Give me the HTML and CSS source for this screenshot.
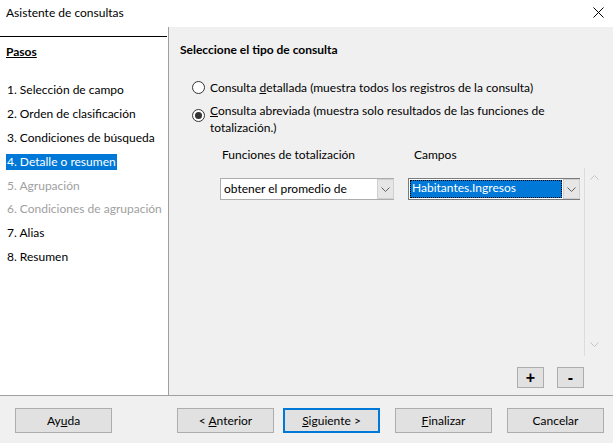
FILE: index.html
```html
<!DOCTYPE html>
<html lang="es">
<head>
<meta charset="utf-8">
<title>Asistente de consultas</title>
<link rel="stylesheet" href="styles.css">
</head>
<body>
<div class="window">
  <div class="titlebar">
    <span class="title">Asistente de consultas</span>
    <span class="close"><svg width="11" height="11" viewBox="0 0 11 11"><path d="M0.5 0.5 L10.5 10.5 M10.5 0.5 L0.5 10.5" stroke="#000" stroke-width="1" fill="none"/></svg></span>
  </div>
  <div class="main">
    <div class="sidebar">
      <div class="rule"></div>
      <div class="pasos">Pasos</div>
      <ul class="steps">
        <li><span>1. Selección de campo</span></li>
        <li><span>2. Orden de clasificación</span></li>
        <li><span>3. Condiciones de búsqueda</span></li>
        <li class="active"><span>4. Detalle o resumen</span></li>
        <li class="disabled"><span>5. Agrupación</span></li>
        <li class="disabled"><span>6. Condiciones de agrupación</span></li>
        <li><span>7. Alias</span></li>
        <li><span>8. Resumen</span></li>
      </ul>
    </div>
    <div class="content">
      <div class="heading">Seleccione el tipo de consulta</div>
      <div class="options">
        <div class="opt">
          <span class="radio r1"></span>
          <span class="optlabel">Consulta <u>d</u>etallada (muestra todos los registros de la consulta)</span>
        </div>
        <div class="opt">
          <span class="radio r2 checked"></span>
          <span class="optlabel"><u>C</u>onsulta abreviada (muestra solo resultados de las funciones de<br>totalización.)</span>
        </div>
      </div>
      <div class="fieldlabels">
        <span class="lab1">Funciones de totalización</span>
        <span class="lab2">Campos</span>
      </div>
      <div class="scrollarea">
        <div class="rows">
          <div class="row">
            <div class="combo c1">
              <span class="value">obtener el promedio de</span>
              <span class="dropbtn"><svg width="9" height="5" viewBox="0 0 9 5"><path d="M0.5 0.5 L4.5 4.5 L8.5 0.5" stroke="#606060" fill="none"/></svg></span>
            </div>
            <div class="combo c2">
              <span class="value sel">Habitantes.Ingresos</span>
              <span class="dropbtn"><svg width="9" height="5" viewBox="0 0 9 5"><path d="M0.5 0.5 L4.5 4.5 L8.5 0.5" stroke="#606060" fill="none"/></svg></span>
            </div>
          </div>
        </div>
        <div class="vscroll">
          <svg width="9" height="5" viewBox="0 0 9 5"><path d="M0.5 4.5 L4.5 0.5 L8.5 4.5" stroke="#c4c4c4" fill="none"/></svg>
          <svg width="9" height="5" viewBox="0 0 9 5"><path d="M0.5 0.5 L4.5 4.5 L8.5 0.5" stroke="#c4c4c4" fill="none"/></svg>
        </div>
      </div>
      <div class="addrem">
        <button class="small">+</button>
        <button class="small">-</button>
      </div>
    </div>
  </div>
  <div class="footer">
    <button class="btn help">Ay<u>u</u>da</button>
    <button class="btn prev">&lt; <u>A</u>nterior</button>
    <button class="btn next"><u>S</u>iguiente &gt;</button>
    <button class="btn finish"><u>F</u>inalizar</button>
    <button class="btn cancel">Cancelar</button>
  </div>
</div>
</body>
</html>
```

FILE: styles.css
```css
* { box-sizing: border-box; }
html, body { margin: 0; padding: 0; }
body {
  width: 613px;
  height: 443px;
  overflow: hidden;
  font-family: Lato, "Open Sans", sans-serif;
  font-size: 12px;
  color: #000;
  background: #f0f0f0;
}
.window { width: 613px; height: 443px; display: flex; flex-direction: column; }

.titlebar {
  height: 27px;
  background: #fff;
  display: flex;
  align-items: center;
  justify-content: space-between;
  padding: 0 9px 2px 6px;
}
.title { line-height: 16px; }
.close { display: flex; }

.main { height: 368px; display: flex; }
.sidebar {
  width: 169px;
  background: #fff;
  border-right: 1px solid #a0a0a0;
  padding-top: 9px;
}
.rule { height: 1px; background: #000; width: 167px; }
.pasos {
  margin: 7px 0 0 6px;
  line-height: 16px;
  font-weight: bold;
  text-decoration: underline;
}
.steps { list-style: none; margin: 18px 0 0 0; padding: 0 0 0 6px; }
.steps li { height: 23.9px; display: flex; align-items: center; }
.steps li span { line-height: 16px; padding: 0 1px; }
.steps li.active span { background: #0078d7; color: #fff; }
.steps li.disabled span { color: #a0a0a0; }

.content {
  flex: 1;
  padding: 15px 10px 0 11px;
  display: flex;
  flex-direction: column;
}
.heading { line-height: 16px; font-weight: bold; }
.options { margin: 21px 0 0 12px; }
.opt { display: flex; align-items: flex-start; }
.opt + .opt { margin-top: 6px; }
.optlabel { line-height: 17px; margin-left: 5px; }
.radio {
  width: 13px;
  height: 13px;
  border: 1px solid #333;
  border-radius: 50%;
  background: #fff;
  flex: none;
  display: flex;
  align-items: center;
  justify-content: center;
}
.r1 { margin-top: 2px; }
.r2 { margin-top: 7px; }
.radio.checked::after {
  content: "";
  width: 7px;
  height: 7px;
  border-radius: 50%;
  background: #333;
}

.fieldlabels { margin-top: 11px; line-height: 16px; display: flex; }
.lab1 { margin-left: 42px; width: 192px; }

.scrollarea { margin-top: 5px; height: 188px; display: flex; }
.rows { flex: 1; padding-top: 10px; }
.row { display: flex; padding-left: 40px; }
.combo {
  height: 22px;
  border: 1px solid #adadad;
  background: #fff;
  display: flex;
  align-items: stretch;
}
.c1 { width: 174px; }
.c2 { width: 172px; margin-left: 14px; border-color: #7a7a7a; }
.value { flex: 1; line-height: 20px; padding-left: 3px; white-space: nowrap; }
.value.sel {
  margin: 1px;
  line-height: 16px;
  padding-left: 2px;
  background: #0078d7;
  color: #fff;
  outline: 1px dotted #000;
  outline-offset: -1px;
}
.dropbtn {
  width: 17px;
  border: 1px solid #d0d0d0;
  background: #e6e6e6;
  display: flex;
  align-items: center;
  justify-content: center;
  margin: 0 -1px 0 0;
}
.vscroll {
  width: 19px;
  border-left: 1px solid #dcdcdc;
  display: flex;
  flex-direction: column;
  align-items: center;
  justify-content: space-between;
  padding: 7px 0 9px 0;
}

.addrem { margin-top: 11px; display: flex; justify-content: flex-end; padding-right: 19px; }
.small {
  width: 27px;
  height: 21px;
  padding: 0;
  border: 1px solid #adadad;
  background: #e1e1e1;
  font-family: "Liberation Sans", sans-serif;
  font-weight: bold;
  font-size: 16px;
  line-height: 18px;
  color: #000;
}
.small + .small { margin-left: 13px; }

.footer {
  height: 48px;
  border-top: 1px solid #a0a0a0;
  display: flex;
  align-items: flex-start;
  padding-top: 12px;
}
.btn {
  width: 97px;
  height: 25px;
  padding: 0;
  border: 1px solid #adadad;
  background: #e1e1e1;
  font-family: Lato, "Open Sans", sans-serif;
  font-size: 12px;
  color: #000;
}
.help { margin-left: 15px; }
.prev { margin-left: 65px; }
.next { margin-left: 9px; border: 2px solid #0078d7; }
.finish { margin-left: 15px; }
.cancel { margin-left: 15px; }
```
